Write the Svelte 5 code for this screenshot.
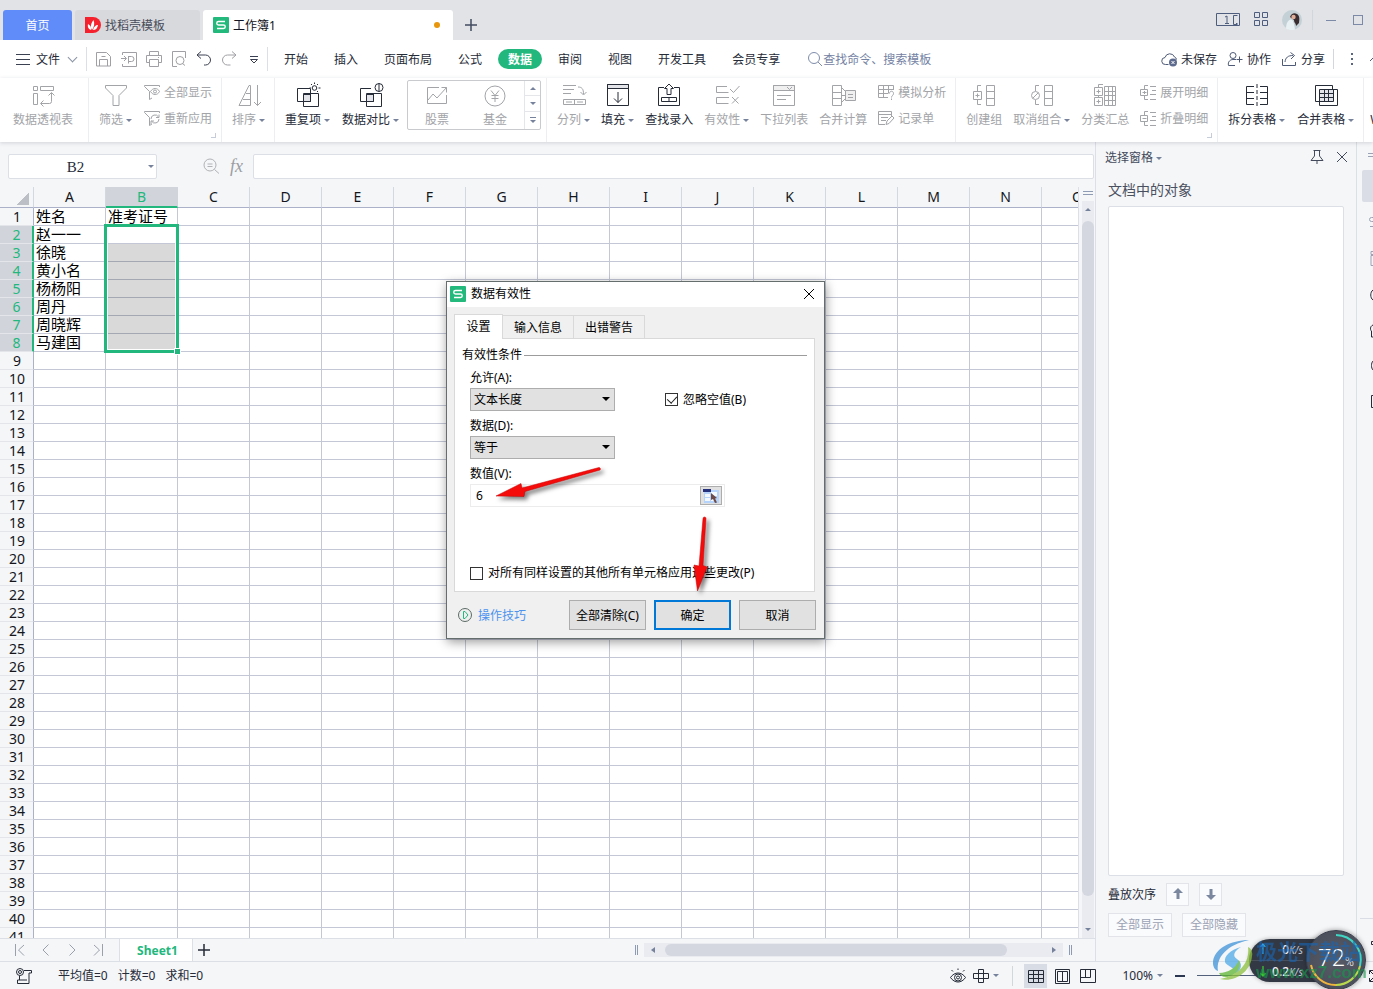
<script>
  const icons = {
    pivot: '<path d="M2.500 3.500h4v4h-4zM9.500 3.500h13v4h-13zM2.500 10.500h4v11h-4zM20.500 10v8.500a2 2 0 0 1-2 2H10M17.500 12.500l3-3 3 3M12.500 17.500l-3 3 3 3"/>',
    funnel: '<path d="M1.500 2.500h21v2.500l-7.500 7.500v10h-6v-10L1.500 5z"/>',
    sort: '<path d="M13.500 22.500v-20h-1.500L2 22.500zM9 10.500h4.500M6 16.500h7.500M20.500 2v20.500M17 19l3.500 3.500L24 19"/>',
    dup: '<path d="M14 5.500H1.500v13h6M7.500 10.500v13h15v-13z"/><path d="M7.500 11.500h7v7h-7z" fill="#e2e4ea"/><path d="M7.500 18.500h7v-13"/><circle cx="18.500" cy="5" r="2.300"/><path d="M18.500-.5v1.500M13.500 5h1.500M22.500 5h2M15 1l1 1M22 1l-1 1M22 9l-1-1"/>',
    compare: '<path d="M12 5.500H1.500v13h6M7.500 10.500v13h15v-13z"/><path d="M7.500 11.500h7v7h-7z" fill="#e2e4ea"/><path d="M7.500 18.500h7v-8"/><circle cx="20" cy="4.500" r="4"/><path d="M20 .5v8"/>',
    stock: '<path d="M14 4.500H2.500v16h19V12M3 17l5-6 4 4 9.500-10.500M16.500 4.500h5v5"/>',
    fund: '<circle cx="12" cy="13" r="10"/><path d="M8 7.500l4 5 4-5M12 12.500V19M8.500 12.500h7M8.500 15.500h7"/>',
    split: '<path d="M1 2.500h13M1 6.500h11M1 10.500h8M16 4c4 0 5.500 2 5.500 7M18.500 9l3 3 3-3M1.500 16.500h22v5h-22zM12.500 16.500v5M4 19h6M15 19h6"/>',
    fill: '<path d="M1.500 1.500h21v4h-21z" fill="#e2e4ea"/><path d="M1.500 1.500h21v21h-21zM12 9v10.500M8 15.500l4 4 4-4"/>',
    lookup: '<path d="M7 4.500H1.500v18h21v-18H17M12 1L7.500 5.500H10v6h4v-6h2.500zM4.500 14.500h15v4h-15zM12 14.500v4"/>',
    valid: '<path d="M12 3.500H1.500v6h12M14 14.500H1.500v6h12M15 6l3.500 3.500L24.500 3M17 14l6.500 6.500M23.500 14L17 20.500"/>',
    drop: '<path d="M1.500 2.500h21v5h-21z" fill="#f0f0f0"/><path d="M1.500 2.500h21v20h-21zM15 4l2.500 2.500L20 4M5 12.500h14M5 16.500h9"/>',
    merge: '<path d="M1.500 2.500h9v20h-9zM1.500 9.500h9M1.500 15.500h9M11 5l4 4M11 19l4-4"/><path d="M14.500 7.500h10v10h-10z" fill="#f0f0f0"/><path d="M11 12.500h4M17 11.500h5M17 14.500h5"/>',
    group: '<path d="M9 2.500H5.500V8M5.500 17v4.500H9M1.500 8.500h8v8h-8zM5.500 10.500v4M3.500 12.500h4M14.500 2.500h8v20h-8zM14.500 8.500h8M14.500 15.500h8"/>',
    ungroup: '<path d="M9 2.500H5.500V8M5.500 17v4.500H9M14.500 2.500h8v20h-8zM14.500 8.500h8M14.500 15.500h8"/><circle cx="5.500" cy="12.500" r="4"/><path d="M3 15l5-5"/>',
    subtotal: '<path d="M11.500 3.500h11v19h-11zM11.500 8.500h11M11.500 12.500h11M11.500 17.500h11M15.500 3.500v19M19.500 3.500v19M10 1.500H5.500V4M1.500 4.500h8v8h-8zM5.500 6.500v4M3.500 8.500h4M1.500 14.500h8v8h-8zM5.500 16.500v4M3.500 18.500h4M5.500 12v2"/>',
    tsplit: '<path d="M9 3.500H1.500v18H9M1.500 9.500H9M1.500 15.500H9M15 3.500h7.500v18H15M15 9.500h7.500M15 15.500h7.500"/><path d="M12 1v23" stroke-dasharray="4 2"/>',
    tmerge: '<path d="M5 18.500H1.500v-16h17V6"/><path d="M5.500 6.500h14v12h-14z" fill="#e2e4ea"/><path d="M19 6.500h4.500v16h-18V18M5.500 10.500h14M5.500 14.500h14M10.500 6.500v12M14.500 6.500v12"/>',
    sShow: '<path d="M5.500 15.500v-8L.500 2.500v-1h15V3M5.500 15.500L8 14M6.500 7.500c2.500-4 7-4 9 0-2 4-6.500 4-9 0z"/><circle cx="11" cy="7.500" r="1.500"/>',
    sReapply: '<path d="M5.500 15.500v-8L.500 2.500v-1h15V3M5.500 15.500L8 14M7 9a4 4 0 0 1 7.500-2M15 4.500V7.500h-3M15 9a4 4 0 0 1-7.500 2M7 14v-3h3"/>',
    sWhat: '<path d="M10 13.500H.500v-12h15V6M.500 5.500h15M.500 9.500H10M5.500 1.500v12M10.500 1.500v8M11.500 9.500c0-3 4-3 4 0 0 2-2 2-2 4M13.500 14.500v1.500"/>',
    sForm: '<path d="M7 14.500H.500v-13h13V6M.500 4.500h13M3 7.500h7M3 10.500h5M8 14.500l1-3.500 5-5 2 2-5 5.500z"/>',
    sExpand: '<path d="M8 1.500H4.500V5M4.500 11v4.500H8M.500 5.500h7v6h-7zM4.500 7v3M2.500 8.500h4M10 2.500h6M12 6.500h4M10 10.500h6M10 15.500h6"/>',
    sCollapse: '<path d="M8 1.500H4.500V5M4.500 11v4.500H8M.500 5.500h7v6h-7zM2.500 8.500h4M10 2.500h6M12 6.500h4M10 10.500h6M10 15.500h6"/>',
    save: '<path d="M.500 1.500h10l4 4v9.500H.500zM3.500 15V8.500h8V15M5.500 5.500h4"/>',
    exportPdf: '<path d="M1.500 4V1.500h14v14h-14V13M0 7.500h5M3 5l2.500 2.500L3 10M7.500 12.500V5M7.500 5.500h3a2.500 2.500 0 0 1 0 5h-3"/>',
    print: '<path d="M3.500 4.500v-4h9v4M3.500 11.500h-3v-7h15v7h-3M3.500 8.500h9v7h-9zM12 6.500h1"/>',
    preview: '<path d="M6 15.500H1.500v-15h13V7M14 14.500l-2.500-2"/><circle cx="9" cy="9.500" r="4"/>',
    undo: '<path d="M5 .500L1 4 5 7.500M1.500 4h8a5 5 0 0 1 0 10H8"/>',
    redo: '<path d="M11 .500L15 4 11 7.500M14.500 4H6.500a5 5 0 0 0 0 10h3"/>',
    more: '<path d="M4 5.500h8M4.500 8.500h7L8 12z"/>',
    search: '<circle cx="7" cy="7" r="5.500"/><path d="M11 11l4 4"/>',
    cloud: '<path d="M7.500 13.500H4.500a3.500 3.500 0 0 1-.5-7 5 5 0 0 1 9.500-.5 3 3 0 0 1 2 2.500"/><circle cx="12" cy="11.500" r="4" fill="#5d6b8e" stroke="none"/><path d="M10.500 10l3 3M13.500 10l-3 3" stroke="#fff"/>',
    people: '<circle cx="6" cy="4.500" r="3"/><path d="M8 14.500H1.500c-1-4 2-6 4.500-6h3M12.500 5.500v6M9.500 8.500h6"/>',
    share: '<path d="M1.500 8v6.500h13V11M4 11c.5-4.500 3-6.500 8-6.500M9.500 1.500l4 3-3.500 3.500"/>',
    pin: '<path d="M4.500 1.500h7M5.500 1.500v5.500l-3.500 4.500h12l-3.500-4.500V1.500M8 11.500V15"/>',
    close: '<path d="M3 3l10 10M13 3L3 13"/>',
    zoomOut: '<circle cx="7" cy="7" r="6"/><path d="M11.500 11.500l4.500 4M4.500 6h5M4.500 8.500h5"/>',
    first: '<path d="M3.500 2v12M12 3L6.500 8l5.500 5.500"/>',
    prev: '<path d="M10.500 2.500L5 8l5.500 5.500"/>',
    next: '<path d="M5.500 2.500L11 8l-5.500 5.500"/>',
    last: '<path d="M12.500 2v12M4 3l5.500 5L4 13.500"/>',
    plus: '<path d="M8 2v12M2 8h12" stroke-width="1.500"/>',
    macro: '<circle cx="4" cy="4" r="3.500"/><circle cx="4" cy="4" r="1.500"/><path d="M8 2.500h7.500V5H13v10.500H1.500V12H11M3.500 8v4"/>',
    eye: '<path d="M.500 9.500c4-6 11-6 15 0-4 6-11 6-15 0zM8 .500V2M1.500 2L3 3.500M14.500 2L13 3.500"/><circle cx="8" cy="9.500" r="3.500"/><circle cx="8" cy="9.500" r="1.500"/>',
    cross: '<path d="M5.500 1.500h5v13h-5zM.500 5.500h15v5H.500z"/>',
    vGrid: '<path d="M.500 2.500h15v12H.500zM.500 6.500h15M.500 10.500h15M5.500 2.500v12M10.500 2.500v12"/>',
    vRead: '<path d="M1.500 1.500h14v14h-14zM3.500 3.500h10v10h-10zM8.500 3.500v10"/>',
    vPage: '<path d="M.500 1.500h15v13H.500zM.500 9.500h10v-8M5.500 1.500v8"/>',
    up: '<path d="M8 4v9" stroke-width="3"/><path d="M8 2l5 5H3z" fill="currentColor" stroke="none"/>',
    down: '<path d="M8 3v9" stroke-width="3"/><path d="M8 14l5-5H3z" fill="currentColor" stroke="none"/>'
  };

  const quick = [
    ['save', '保存', false], ['exportPdf', '输出为PDF', false], ['print', '打印', false],
    ['preview', '打印预览', false], ['undo', '撤销', true], ['redo', '恢复', false], ['more', '更多', true]
  ];
  const menus = ['开始', '插入', '页面布局', '公式', '数据', '审阅', '视图', '开发工具', '会员专享'];
  const tool = (icon, label, on = false, caret = false) => ({ icon, label, on, caret });
  const pair = (a, al, b, bl) => ({ pair: [[a, al], [b, bl]] });
  const groups = [
    { cls: 'first', items: [tool('pivot', '数据透视表')] },
    { corner: true, items: [tool('funnel', '筛选', false, true), pair('sShow', '全部显示', 'sReapply', '重新应用')] },
    { items: [tool('sort', '排序', false, true)] },
    { cls: 'tight', items: [tool('dup', '重复项', true, true), tool('compare', '数据对比', true, true), { gallery: true }] },
    { cls: 'snug', items: [tool('split', '分列', false, true), tool('fill', '填充', true, true), tool('lookup', '查找录入', true),
      tool('valid', '有效性', false, true), tool('drop', '下拉列表'), tool('merge', '合并计算'), pair('sWhat', '模拟分析', 'sForm', '记录单')] },
    { cls: 'snug', corner: true, items: [tool('group', '创建组'), tool('ungroup', '取消组合', false, true), tool('subtotal', '分类汇总'),
      pair('sExpand', '展开明细', 'sCollapse', '折叠明细')] },
    { items: [tool('tsplit', '拆分表格', true, true), tool('tmerge', '合并表格', true, true)] }
  ];

  const cols = 'ABCDEFGHIJKLMNO'.split('');
  const rows = Array.from({ length: 41 }, (_, i) => i + 1);
  const data = {
    A1: '姓名', B1: '准考证号', A2: '赵一一', A3: '徐晓', A4: '黄小名', A5: '杨杨阳', A6: '周丹', A7: '周晓辉', A8: '马建国'
  };
  const selected = (c, r) => c === 'B' && r > 2 && r < 9;

  let blank = $state(true);
  let applyAll = $state(false);
  let value = $state('6');
</script>

{#snippet ico(name, size = 16)}
  <svg class="ico" width={size} height={size} viewBox="0 0 {size} {size}" aria-hidden="true">{@html icons[name]}</svg>
{/snippet}

{#snippet logo()}
  <svg class="ico" width="16" height="16" viewBox="0 0 16 16" aria-hidden="true">
    <rect width="16" height="16" rx="1" fill="#24b97c" stroke="none" />
    <path d="M12 4.500H5.500a1.500 1.500 0 0 0 0 3.500h5a1.600 1.600 0 0 1 0 3.500H4" stroke="#fff" stroke-width="1.400" />
  </svg>
{/snippet}

<div class="app">
  <header class="title">
    <button class="tab home">首页</button>
    <button class="tab docer">
      <svg class="ico" width="16" height="16" viewBox="0 0 16 16" aria-hidden="true">
        <path d="M0 0h8a8 8 0 0 1 0 16H0z" fill="#f5222d" stroke="none" />
        <path d="M7 13C5 10 6 6 8.500 3c1.500 4 .500 7-1.500 10zM6 13C3 12 2.500 9.500 3 7c2 1 3.500 3 3 6zM8 13c.500-3 2.500-5 5-5-.500 3-2 5-5 5z" fill="#fff" stroke="none" />
      </svg>
      <span>找稻壳模板</span>
    </button>
    <button class="tab book">{@render logo()}<span>工作簿1</span><i class="dirty"></i></button>
    <button class="add" aria-label="新建">{@render ico('plus')}</button>
    <div class="window">
      <svg class="ico" width="24" height="16" viewBox="0 0 24 16" aria-hidden="true"><path d="M.500 1.500h23v12H.500zM9 5l2-1v7M9 11.500h4M21.500 3.500h-4v9h4M20 11.500h1.500" /></svg>
      <svg class="ico" width="16" height="16" viewBox="0 0 16 16" aria-hidden="true"><path d="M1.500 .500h5v5h-5zM9.500 .500h5v5h-5zM1.500 8.500h5v5h-5zM9.500 8.500h5v5h-5z" /></svg>
      <svg class="ico" width="20" height="20" viewBox="0 0 20 20" aria-hidden="true">
        <circle cx="10" cy="10" r="10" fill="#c3d1d6" stroke="none" />
        <path d="M4 18.500c0-6 3-9 5-9s3 4 4 10c-3 1-7 .500-9-1z" fill="#e8f0f3" stroke="none" />
        <path d="M8 7c1-3 4-5 7-3s2.500 5 2 9l-3 3c0-3-2-3-2-6z" fill="#3a2d30" stroke="none" />
        <circle cx="11.500" cy="7" r="2.200" fill="#dfae98" stroke="none" />
      </svg>
      <i class="bar"></i>
      <button aria-label="最小化"><i class="min"></i></button>
      <button class="big" aria-label="最大化"><i class="max"></i></button>
    </div>
  </header>

  <nav class="menu">
    <button class="file"><i class="burger"></i><span>文件</span><i class="chev"></i></button>
    <div class="quick">
      {#each quick as [name, label, on]}
        <button class:on aria-label={label}>{@render ico(name)}</button>
      {/each}
    </div>
    <div class="menus">
      {#each menus as m}
        <button class:active={m === '数据'}>{m}</button>
      {/each}
    </div>
    <label class="find">{@render ico('search')}<input placeholder="查找命令、搜索模板" aria-label="搜索" /></label>
    <div class="account">
      <button>{@render ico('cloud')}<span>未保存</span></button>
      <button>{@render ico('people')}<span>协作</span></button>
      <button>{@render ico('share')}<span>分享</span></button>
      <i class="bar"></i>
      <button class="dots" aria-label="更多"><i></i><i></i><i></i></button>
      <svg width="3" height="8" viewBox="0 0 3 8" aria-hidden="true"><path d="M0 6l4-4" /></svg>
    </div>
  </nav>

  <div class="ribbon">
    {#each groups as g}
      <div class="group {g.cls ?? ''}">
        {#each g.items as it}
          {#if it.pair}
            <div class="pair">
              {#each it.pair as [name, label]}
                <button>{@render ico(name)}<span>{label}</span></button>
              {/each}
            </div>
          {:else if it.gallery}
            <div class="gallery">
              <button class="tool">{@render ico('stock', 24)}<span>股票</span></button>
              <button class="tool">{@render ico('fund', 24)}<span>基金</span></button>
              <div class="steps">
                <button aria-label="上一行"><i class="caret upward"></i></button>
                <button aria-label="下一行"><i class="caret"></i></button>
                <button aria-label="展开"><i class="rule"></i><i class="caret"></i></button>
              </div>
            </div>
          {:else}
            <button class="tool" class:on={it.on}>
              {@render ico(it.icon, 24)}
              <span>{it.label}{#if it.caret}<i class="caret"></i>{/if}</span>
            </button>
          {/if}
        {/each}
        {#if g.corner}<i class="corner"></i>{/if}
      </div>
    {/each}
    <button class="tool on cut"><span>WPS</span></button>
  </div>

  <div class="body">
    <main>
      <div class="formula">
        <div class="name"><input value="B2" aria-label="名称框" /><i class="caret"></i></div>
        <div class="fx">{@render ico('zoomOut')}<em>fx</em></div>
        <input class="entry" aria-label="编辑栏" />
      </div>

      <div class="sheet">
        <div class="grid">
          <table>
            <colgroup><col class="rowcol" />{#each cols as c}<col class="datacol" />{/each}</colgroup>
            <thead>
              <tr>
                <th class="all"><i></i></th>
                {#each cols as c}<th scope="col" class:sel={c === 'B'}>{c}</th>{/each}
              </tr>
            </thead>
            <tbody>
              {#each rows as r}
                <tr>
                  <th scope="row" class:sel={r > 1 && r < 9}>{r}</th>
                  {#each cols as c}<td class:picked={selected(c, r)}>{data[c + r] ?? ''}</td>{/each}
                </tr>
              {/each}
            </tbody>
          </table>
          <div class="range"><i></i></div>
        </div>
        <div class="vscroll">
          <i class="splitter"></i>
          <div class="track"><i class="caret upward"></i><i class="thumb"></i><i class="caret"></i></div>
        </div>
      </div>

      <div class="sheets">
        <div class="nav">
          <button aria-label="第一张">{@render ico('first')}</button>
          <button aria-label="上一张">{@render ico('prev')}</button>
          <button aria-label="下一张">{@render ico('next')}</button>
          <button aria-label="最后一张">{@render ico('last')}</button>
        </div>
        <button class="current">Sheet1</button>
        <button class="add" aria-label="新建工作表">{@render ico('plus')}</button>
        <div class="hscroll">
          <i class="grip"></i>
          <div class="track"><i class="caret left"></i><i class="thumb"></i><i class="caret right"></i></div>
          <i class="grip"></i>
        </div>
      </div>
    </main>

    <aside class="pane">
      <div class="head">
        <span>选择窗格<i class="caret"></i></span>
        <button aria-label="固定">{@render ico('pin')}</button>
        <button aria-label="关闭">{@render ico('close')}</button>
      </div>
      <h2>文档中的对象</h2>
      <div class="list"></div>
      <div class="order">
        <span>叠放次序</span>
        <button aria-label="上移">{@render ico('up')}</button>
        <button aria-label="下移">{@render ico('down')}</button>
      </div>
      <div class="order">
        <button class="wide">全部显示</button>
        <button class="wide">全部隐藏</button>
      </div>
    </aside>

    <div class="strip">
      <svg width="16" height="820" viewBox="0 0 16 820" aria-hidden="true">
        <path d="M11 11.500h5M11 14.500h5" stroke="#9aa3b5" />
        <path d="M16 28H7a2 2 0 0 0-2 2v28a2 2 0 0 0 2 2h9z" fill="#dadde5" stroke="none" />
        <path d="M16 75.500h-1.500a1 1 0 0 0 0 4H16M13 84.500h3M16 109.500h-2v3h2M16 113.500h-2v10h2" stroke="#9aa3b5" />
        <path d="M16 148c-3 2-3 8 0 10M16 183c-3 1-3 5-1.500 6v6H16M16 219c-2 2-2 7 0 9M16 253.500h-1.500v12H16" />
        <path d="M3 776.500h13" stroke="#dadde5" /><path d="M16 799.500h-1.500v3H16" />
      </svg>
    </div>
  </div>

  <footer class="status">
    {@render ico('macro')}
    <span class="stats"><span>平均值=0</span><span>计数=0</span><span>求和=0</span></span>
    <div class="views">
      <button aria-label="护眼模式">{@render ico('eye')}</button>
      <button aria-label="阅读模式">{@render ico('cross')}<i class="caret"></i></button>
      <i class="bar"></i>
      <button class="view active" aria-label="普通视图">{@render ico('vGrid')}</button>
      <button class="view" aria-label="分页预览">{@render ico('vRead')}</button>
      <button class="view" aria-label="页面布局">{@render ico('vPage')}</button>
      <button class="zoom">100%<i class="caret"></i></button>
      <i class="minus"></i>
      <i class="rail"></i>
      <svg class="ico" width="8" height="16" viewBox="0 0 8 16" aria-hidden="true"><path d="M8 2.500H4.500V6M5 3l3 3M8 13.500H4.500V10M5 13l3-3" /></svg>
    </div>
  </footer>

  <div class="dialog" role="dialog" aria-label="数据有效性">
    <div class="caption">{@render logo()}<span>数据有效性</span><button aria-label="关闭">{@render ico('close')}</button></div>
    <div class="tabs">
      <button class="active">设置</button><button>输入信息</button><button>出错警告</button>
    </div>
    <div class="panel">
      <div class="legend">有效性条件<i></i></div>
      <div class="fields">
        <label for="allow">允许(A):</label>
        <div class="line">
          <div class="pick"><select id="allow"><option>文本长度</option></select><i class="caret"></i></div>
          <label class="check"><input type="checkbox" bind:checked={blank} />忽略空值(B)</label>
        </div>
        <label for="op">数据(D):</label>
        <div class="pick"><select id="op"><option>等于</option></select><i class="caret"></i></div>
        <label for="val">数值(V):</label>
        <div class="ref">
          <input id="val" bind:value />
          <button aria-label="选择区域">
            <svg width="16" height="14" viewBox="0 0 16 14" aria-hidden="true">
              <rect x="1" y="1" width="15" height="13" fill="#b5d3fb" /><path d="M2 5h5v3H2zM2 9h5v3H2zM8 3h6v4H8zM8 9h3v3H8z" fill="#f4f9ff" />
              <rect width="8" height="3" fill="#26337c" /><path d="M8 4l6 5-2 .500 2 4-2 .500-2-4-2 1z" fill="#6d4a45" />
            </svg>
          </button>
        </div>
        <label class="check all"><input type="checkbox" bind:checked={applyAll} />对所有同样设置的其他所有单元格应用这些更改(P)</label>
      </div>
    </div>
    <div class="actions">
      <a href="#tips">
        <svg class="ico" width="16" height="16" viewBox="0 0 16 16" aria-hidden="true"><circle cx="8" cy="8" r="6.500" stroke="#5a6b66" /><path d="M6.500 4.500h1.500L11 8l-3 3.500H6.500z" stroke="#24b97c" /></svg>
        <span>操作技巧</span>
      </a>
      <button>全部清除(C)</button>
      <button class="primary">确定</button>
      <button>取消</button>
    </div>
    <svg class="arrows" viewBox="0 0 379 358" aria-hidden="true">
      <path d="M153 186.500a1.500 1.500 0 0 1 1 2.500L79 210.500l-1 5-28-.500 25-12.500 1 4.500z" />
      <path d="M257 237.500a1.500 1.500 0 0 1 3 0L257 284.500l4 1.500-9.500 24-3.500-26 5 1z" />
    </svg>
  </div>

  <div class="gauge">
    <div class="speed">
      <span><b class="upload">↑</b>0<small>K/s</small></span>
      <span><b class="download">↓</b>0.2<small>K/s</small></span>
    </div>
    <div class="ball">
      <svg width="58" height="58" viewBox="0 0 58 58" aria-hidden="true">
        <path d="M29 4a25 25 0 0 1 24 31" stroke="#3fd6c4" /><path d="M53 35a25 25 0 0 1-24 19" stroke="#b9d84c" /><path d="M29 54A25 25 0 0 1 4 34" stroke="#f0b53c" />
      </svg>
      <span>72<small>%</small></span>
    </div>
    <svg class="swirl" width="42" height="42" viewBox="0 0 42 42" aria-hidden="true">
      <path d="M36 1C18 1 0 10 0 24c0 4 2 7 5 8C3 18 14 6 36 1z" fill="#3f93d8" />
      <path d="M28 8C17 11 11 17 12 23c2 5 12 5 10 13 7-5 8-12 2-16-5-3-3-8 4-12z" fill="#4fa9e8" />
      <path d="M6 34c9 0 17-5 20-13 3 8-4 17-13 17-4 0-6-2-7-4z" fill="#5cb531" />
      <path d="M7 40c14 4 31-7 32-23 1-4-1-8-4-9 2 14-7 28-28 32z" fill="#8cc03c" />
    </svg>
    <div class="mark"><strong>极光下载站</strong><span>www.xz7.com</span></div>
  </div>
</div>

<style>
  :global(body) { overflow: hidden; }
  .app {
    --ink: #262b38; --muted: #a2a4a8; --edge: #dcdfe5; --soft: #f5f6f8; --green: #22b87d; --tri: #76819b;
    position: relative; display: flex; flex-direction: column; height: 100vh; overflow: hidden;
    font: 12px/16px "Noto Sans", "Noto Sans CJK SC", sans-serif; color: var(--ink); background: var(--soft);
  }
  .app * { box-sizing: border-box; }
  button { margin: 0; padding: 0; border: 0; background: none; font: inherit; color: inherit; display: flex; align-items: center; white-space: nowrap; flex: none; }
  input, select { font: inherit; color: inherit; margin: 0; outline: 0; min-width: 0; }
  i { display: block; flex: none; font-style: normal; }
  .app :global(svg) { display: block; flex: none; fill: none; stroke: currentColor; overflow: visible; }
  .caret { width: 0; height: 0; border: 3px solid transparent; border-top-color: var(--tri); border-bottom: 0; }
  .caret.upward { border-top: 0; border-bottom: 3px solid var(--tri); }
  .caret.left { border: 3px solid transparent; border-right: 4px solid var(--tri); border-left: 0; }
  .caret.right { border: 3px solid transparent; border-left: 4px solid var(--tri); border-right: 0; }
  .bar { width: 1px; height: 20px; background: #d3d6dc; }
  .tab span, .file span, .account span, .pair span, .actions span { padding-top: 2px; }

  .title { display: flex; align-items: flex-end; height: 40px; padding-left: 3px; gap: 3px; background: #e1e3e7; flex: none; }
  .tab { height: 30px; border-radius: 3px 3px 0 0; }
  .home { width: 69px; padding-top: 2px; justify-content: center; background: #608cfa; color: #fff; }
  .docer { width: 125px; padding-left: 10px; gap: 4px; background: #d8d9dd; color: #484d5a; }
  .book { width: 250px; padding: 0 13px 0 10px; gap: 4px; background: #fff; color: #101420; }
  .dirty { width: 6px; height: 6px; border-radius: 3px; margin-left: auto; background: #e8960c; }
  .title .add { height: 30px; padding-left: 7px; color: #424b60; }
  .window { display: flex; align-items: center; align-self: center; margin-left: auto; padding-right: 10px; gap: 13px; color: #4e5d7d; }
  .window .bar { margin-left: -3px; }
  .window button { width: 10px; height: 16px; }
  .window .big { margin-left: 4px; }
  .min { width: 10px; height: 1px; background: #7c8aa8; }
  .max { width: 10px; height: 10px; border: 1px solid #7c8aa8; }

  .menu { display: flex; align-items: center; height: 38px; flex: none; background: #fff; }
  .file { padding-left: 16px; width: 87px; height: 24px; border-right: 1px solid var(--edge); gap: 6px; }
  .burger { width: 14px; height: 11px; border: solid #3b4150; border-width: 1px 0; background: linear-gradient(#3b4150, #3b4150) 0 4px / 100% 1px no-repeat; }
  .chev { width: 7px; height: 7px; margin: -4px 0 0 3px; border: solid #8a92a3; border-width: 0 1px 1px 0; transform: rotate(45deg); }
  .quick { display: flex; gap: 9px; padding: 0 5px 0 9px; height: 24px; border-right: 1px solid var(--edge); color: #a0a0a4; }
  .quick .on { color: #3a4052; }
  .menus { display: flex; gap: 6px; padding-left: 6px; }
  .menus button { height: 20px; padding: 2px 10px 0; border-radius: 10px; }
  .menus .active { background: var(--green); color: #fff; font-weight: 700; }
  .find { display: flex; align-items: center; margin-left: 17px; color: #7f8dab; }
  .find input { border: 0; width: 130px; padding: 1px 0 0; background: none; }
  .find input::placeholder { color: #7482a3; opacity: 1; }
  .account { display: flex; align-items: center; gap: 10px; margin-left: auto; }
  .account button { gap: 4px; }
  .account :global(svg) { color: #4e5a76; }
  .account .bar { margin-left: -2px; }
  .account .dots { flex-direction: column; gap: 3px; width: 16px; }
  .dots i { width: 2px; height: 2px; background: #5a6680; }

  .ribbon { display: flex; height: 64px; flex: none; background: #fff; box-shadow: 0 1px 4px rgba(40, 50, 80, .18); position: relative; z-index: 1; overflow: hidden; }
  .group { position: relative; display: flex; flex: none; gap: 12px; padding: 2px 9px 0 10px; border-right: 1px solid #eceef1; }
  .group.first { padding: 2px 15px 0 13px; }
  .group.tight { padding-right: 5px; }
  .group.snug { gap: 11px; }
  .tool { flex-direction: column; gap: 5px; align-self: flex-start; padding-top: 3px; color: var(--muted); }
  .tool span { display: flex; align-items: center; gap: 3px; }
  .tool.on { color: var(--ink); }
  .cut { padding: 34px 0 0 6px; }
  .pair { display: flex; flex-direction: column; gap: 10px; padding-top: 4px; color: var(--muted); }
  .pair button { gap: 4px; height: 16px; }
  .gallery { display: flex; width: 134px; height: 50px; margin-left: -4px; border: 1px solid #c8cace; border-radius: 2px; }
  .gallery .tool { width: 58px; padding-top: 2px; align-items: center; }
  .steps { flex: 1; display: grid; border-left: 1px solid #e4e6ea; }
  .steps button { flex-direction: column; justify-content: center; gap: 2px; border-bottom: 1px solid #e4e6ea; }
  .steps button:last-child { border: 0; }
  .rule { width: 6px; height: 1px; background: var(--tri); }
  .corner { position: absolute; right: 5px; bottom: 4px; width: 5px; height: 5px; border: solid #c6ccd8; border-width: 0 1px 1px 0; }

  .body { flex: 1; min-height: 0; display: flex; }
  main { flex: 1; min-width: 0; display: flex; flex-direction: column; }
  .formula { display: flex; align-items: center; height: 45px; padding: 3px 1px 0 8px; flex: none; }
  .name { display: flex; align-items: center; width: 149px; height: 25px; padding-right: 2px; background: #fff; border: 1px solid var(--edge); border-radius: 2px; }
  .name input { flex: 1; border: 0; padding: 2px 6px 0 0; background: none; text-align: center; font: 15px/20px "Liberation Serif", serif; }
  .fx { display: flex; align-items: center; gap: 11px; width: 96px; padding-left: 46px; color: #b0b2b6; }
  .fx em { font: italic 18px/20px "Liberation Serif", serif; color: #9c9ea3; }
  .entry { flex: 1; height: 25px; background: #fff; border: 1px solid var(--edge); border-radius: 2px; }

  .sheet { flex: 1; min-height: 0; display: flex; }
  .grid { position: relative; flex: 1; min-width: 0; overflow: hidden; background: #fff; border-right: 1px solid var(--edge); }
  table { table-layout: fixed; width: 1114px; border-collapse: separate; border-spacing: 0; }
  .rowcol { width: 34px; }
  .datacol { width: 72px; }
  th, td { padding: 0; height: 18px; border: solid #c3c7d6; border-width: 0 1px 1px 0; line-height: 17px; white-space: nowrap; }
  td { padding-left: 2px; font-size: 15px; color: #000; }
  th { font-size: 14px; font-weight: 400; background: var(--soft); color: #14161c; border-right-color: #aab1c8; border-bottom-color: #e3e5ea; }
  tbody th { padding-left: 1px; }
  thead th { height: 21px; line-height: 18px; border-color: #aab1c8; border-right: 1px solid #d5d8e2; }
  .all i { width: 12px; height: 12px; margin: 3px 0 0 17px; background: linear-gradient(135deg, transparent 50%, #bcbfc6 50%); }
  th.sel { background: #d1d4db; color: var(--green); border-right: 2px solid var(--green); }
  thead th.sel { border-right: 1px solid #d1d4db; border-bottom: 2px solid var(--green); }
  td.picked { background: #d9d9d9; border-bottom-color: #a4a8b2; }
  .range { position: absolute; left: 104px; top: 37px; width: 75px; height: 129px; border: 3px solid var(--green); box-shadow: inset 0 0 0 1px #fff; }
  .range i { position: absolute; right: -5px; bottom: -5px; width: 7px; height: 7px; background: var(--green); border: 1px solid #fff; }
  .vscroll { width: 16px; padding: 0 1px 0 3px; display: flex; flex-direction: column; align-items: stretch; }
  .splitter { height: 4px; margin: 4px 1px 6px; border: solid #8f9bb5; border-width: 1px 0; }
  .vscroll .track { flex: 1; display: flex; flex-direction: column; align-items: center; padding: 7px 0; gap: 10px; background: #e9ebf0; }
  .vscroll .thumb { flex: 1; width: 12px; margin-bottom: 22px; border-radius: 6px; background: #d4d7df; }

  .sheets { display: flex; align-items: center; height: 23px; flex: none; border-top: 1px solid var(--edge); padding-left: 12px; }
  .nav { display: flex; gap: 10px; width: 107px; color: #9aa0ac; }
  .current { width: 74px; height: 22px; justify-content: center; background: #fff; border: solid var(--edge); border-width: 0 1px; color: var(--green); font-weight: 700; padding: 1px 0 0 3px; }
  .sheets .add { padding-left: 3px; }
  .hscroll { display: flex; align-items: center; gap: 6px; width: 437px; margin-left: auto; margin-right: 23px; }
  .grip { width: 3px; height: 10px; border: solid #8f9bb5; border-width: 0 1px; }
  .hscroll .track { flex: 1; display: flex; align-items: center; gap: 10px; height: 14px; padding: 0 7px; background: #e9ebf0; }
  .hscroll .thumb { flex: 1; height: 12px; margin-right: 35px; border-radius: 6px; background: #d4d7df; }

  .pane { display: flex; flex-direction: column; width: 262px; flex: none; padding: 0 12px 24px; border: solid var(--edge); border-width: 0 1px; }
  .head { display: flex; align-items: center; height: 30px; margin: 0 -6px 0 -3px; gap: 9px; color: #434a5b; flex: none; }
  .head span { display: flex; align-items: center; gap: 3px; margin-right: auto; padding-top: 2px; }
  h2 { margin: 8px 0 6px; font: inherit; font-size: 14px; line-height: 20px; color: #4a5060; }
  .list { flex: 1; background: #fff; border: 1px solid var(--edge); border-radius: 2px; margin-bottom: 6px; }
  .order { display: flex; align-items: center; gap: 10px; height: 24px; margin-bottom: 7px; flex: none; }
  .order span { padding-top: 2px; }
  .order button { width: 23px; height: 23px; justify-content: center; background: #fafbfc; border: 1px solid #e2e4ea; color: #7b879f; }
  .order:last-child { margin-bottom: 0; }
  .order .wide { width: 64px; height: 24px; color: #9aa2b4; }
  .strip { width: 16px; flex: none; overflow: hidden; }

  .status { display: flex; align-items: center; height: 28px; flex: none; padding-left: 16px; border-top: 1px solid var(--edge); }
  .stats { display: flex; gap: 10px; margin-left: 26px; }
  .views { display: flex; align-items: center; margin-left: auto; gap: 7px; }
  .views button { gap: 4px; }
  .views .bar { margin: 0 4px 0 6px; }
  .view { width: 23px; height: 24px; justify-content: center; margin-right: -4px; }
  .view.active { background: #d8dce5; }
  .zoom { margin-left: 20px; }
  .minus { width: 10px; height: 2px; margin: 0 5px; background: #2b3750; }
  .rail { width: 151px; height: 1px; margin-right: 10px; background: #53607c; }

  .dialog { position: absolute; left: 446px; top: 281px; width: 379px; display: flex; flex-direction: column; background: #f0f0f0; border: 1px solid #666e6d; box-shadow: 1px 3px 10px rgba(0, 0, 0, .4); color: #000; z-index: 2; }
  .caption { display: flex; align-items: center; height: 25px; padding: 0 7px 2px 3px; gap: 5px; background: #fff; }
  .caption button { margin-left: auto; }
  .tabs { display: flex; align-items: flex-end; height: 31px; padding-left: 7px; }
  .tabs button { height: 23px; width: 71px; padding-top: 2px; justify-content: center; border: 1px solid #d9d9d9; border-left: 0; border-bottom: 0; }
  .tabs .active { width: 49px; height: 25px; margin-bottom: -1px; padding: 0; border: 1px solid #d9d9d9; border-bottom: 0; background: #fff; position: relative; }
  .panel { margin: 0 9px 0 7px; padding: 8px 7px 10px; background: #fff; border: 1px solid #d9d9d9; }
  .legend { display: flex; align-items: center; gap: 2px; margin-bottom: 7px; }
  .legend i { flex: 1; height: 1px; background: #9c9c9c; }
  .fields { display: flex; flex-direction: column; align-items: flex-start; gap: 2px; padding-left: 8px; }
  .fields .line, .fields > .pick { margin-bottom: 5px; }
  .line { display: flex; align-items: center; gap: 50px; }
  .pick { position: relative; width: 145px; height: 23px; }
  .pick select { appearance: none; width: 100%; height: 23px; padding: 0 3px; border: 1px solid #adadad; border-radius: 0; background: #e1e1e1; }
  .pick .caret { position: absolute; right: 5px; top: 9px; border-width: 4px; border-bottom: 0; border-top-color: #000; pointer-events: none; }
  .check { display: flex; align-items: center; gap: 5px; }
  .check.all { margin-top: 56px; }
  .check input { appearance: none; position: relative; width: 13px; height: 13px; border: 1px solid #333; background: #fff; flex: none; }
  .check input:checked::after { content: ""; position: absolute; left: 3px; top: 0; width: 5px; height: 8px; border: solid #222; border-width: 0 1px 1px 0; transform: rotate(42deg); }
  .ref { display: flex; align-items: center; width: 255px; height: 23px; padding-right: 2px; border: 1px solid #ececec; }
  .ref input { flex: 1; border: 0; padding: 0 5px; background: none; }
  .ref button { width: 22px; height: 19px; justify-content: center; background: #e1e1e1; border: 1px solid #adadad; }
  .app .ref svg { stroke: none; }
  .actions { display: flex; align-items: center; gap: 8px; padding: 8px 8px 8px 10px; }
  .actions a { display: flex; align-items: center; gap: 5px; margin-right: auto; color: #4c93ef; text-decoration: none; }
  .actions button { width: 77px; height: 30px; padding-top: 1px; justify-content: center; background: #e1e1e1; border: 1px solid #adadad; }
  .actions .primary { border: 2px solid #0078d7; }
  .arrows { position: absolute; inset: -1px; width: 379px; height: 358px; pointer-events: none; filter: drop-shadow(3px 3px 2px rgba(0, 0, 0, .5)); }
  .app .arrows { fill: #f60b0b; stroke: #c40000; stroke-width: .5px; }

  .gauge { position: absolute; right: 7px; bottom: 0; width: 153px; height: 59px; z-index: 3; }
  .speed { position: absolute; left: 36px; top: 9px; width: 100px; height: 43px; border-radius: 21px; background: #333944; color: #f2f4f8; line-height: 21px; box-shadow: 0 0 4px rgba(0, 0, 0, .3); }
  .speed span { display: flex; align-items: baseline; justify-content: flex-end; width: 54px; height: 21px; font-weight: 500; }
  .speed span + span { border-top: 1px solid #4a505c; }
  .speed b { margin-right: auto; padding-left: 8px; font-weight: 700; }
  .speed small { font-size: 10px; font-style: italic; color: #b8bdc8; }
  .speed .upload { color: #2ea3ee; }
  .speed .download { color: #3cc22f; }
  .ball { position: absolute; right: 0; top: 0; width: 60px; height: 60px; border-radius: 30px; background: radial-gradient(#565b66, #464b58); border: 1px solid #393e4a; display: flex; align-items: center; justify-content: center; color: #fff; box-shadow: 0 0 5px rgba(0, 0, 0, .4); }
  .ball svg { position: absolute; inset: 0; stroke-width: 2px; }
  .ball span { font: 24px/30px Roboto, sans-serif; font-weight: 300; }
  .ball small { font-size: 12px; }
  .swirl { position: absolute; left: 0; top: 9px; opacity: .75; }
  .app .swirl { stroke: none; }
  .mark { position: absolute; left: 43px; top: 10px; display: flex; flex-direction: column; gap: 2px; white-space: nowrap; opacity: .6; }
  .mark strong { font-size: 21px; line-height: 22px; color: #1766b8; }
  .mark span { font: 700 17px/18px "Liberation Sans", sans-serif; color: #159a4b; }
</style>
